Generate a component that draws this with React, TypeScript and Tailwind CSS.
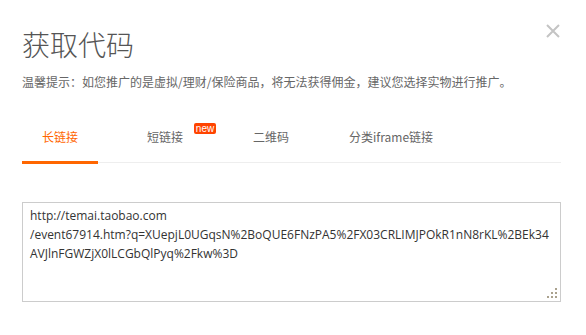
import { useState } from 'react';

const TABS = [
  { key: 'long', label: '长链接', ml: 'ml-0' },
  { key: 'short', label: '短链接', ml: 'ml-[29px]', isNew: true },
  { key: 'qr', label: '二维码', ml: 'ml-[30px]' },
  { key: 'iframe', label: '分类iframe链接', ml: 'ml-[20px]' },
];

const CODE =
  'http://temai.taobao.com\n/event67914.htm?q=XUepjL0UGqsN%2BoQUE6FNzPA5%2FX03CRLIMJPOkR1nN8rKL%2BEk34\nAVJlnFGWZjX0lLCGbQlPyq%2Fkw%3D';

export default function App() {
  const [tab, setTab] = useState('long');

  return (
    <div className="w-[586px] h-[335px] bg-white px-[22px] pt-[30px] font-['Noto_Sans_CJK_SC',sans-serif]">
      <div className="flex items-start justify-between">
        <h2 className="text-[28px] leading-[28px] font-light text-[#555]">获取代码</h2>
        <button className="-mt-[6px] mr-[4px] w-[14px] h-[14px]" aria-label="关闭">
          <svg width="14" height="14" viewBox="0 0 14 14">
            <path d="M1 1L13 13M13 1L1 13" stroke="#c4c4c4" strokeWidth="2" />
          </svg>
        </button>
      </div>
      <p className="mt-[16px] text-xs leading-4 text-[#666]">
        温馨提示：如您推广的是虚拟/理财/保险商品，将无法获得佣金，建议您选择实物进行推广。
      </p>

      {/* Tabs */}
      <div className="mt-[30px] w-[539px] flex border-b border-[#eee]">
        {TABS.map(t => {
          const active = tab === t.key;
          return (
            <button
              key={t.key}
              onClick={() => setTab(t.key)}
              className={`${t.ml} -mb-[2px] px-5 pt-[9px] pb-[16px] border-b-[3px] text-xs leading-4 ${active ? 'border-[#ff6600] text-[#ff6600]' : 'border-transparent text-[#666]'}`}
            >
              <span className="relative">
                {t.label}
                {t.isNew && (
                  <span className="absolute left-full top-[-5px] ml-[11px] w-[22px] h-[11px] rounded-[2px] bg-[#ff4400] text-white text-[10px] leading-[10px] font-['Liberation_Sans',sans-serif] flex items-center justify-center">
                    new
                  </span>
                )}
              </span>
            </button>
          );
        })}
      </div>

      {/* Code box */}
      <div className="relative mt-[39px] w-[539px] h-[100px]">
        <textarea
          readOnly
          wrap="off"
          value={CODE}
          className="w-full h-full resize-none overflow-hidden border border-[#ccc] px-[7px] pt-[3px] text-xs leading-[19px] text-[#333] font-['Open_Sans',sans-serif] outline-none"
        />
        {/* resize grip */}
        <div className="absolute right-[4px] bottom-[4px] grid grid-cols-3 gap-[2px]">
          {[0, 0, 1, 0, 1, 1, 1, 1, 1].map((on, i) => (
            <span key={i} className={`w-[2px] h-[2px] ${on ? 'bg-[#aaa28e]' : ''}`} />
          ))}
        </div>
      </div>
    </div>
  );
}
